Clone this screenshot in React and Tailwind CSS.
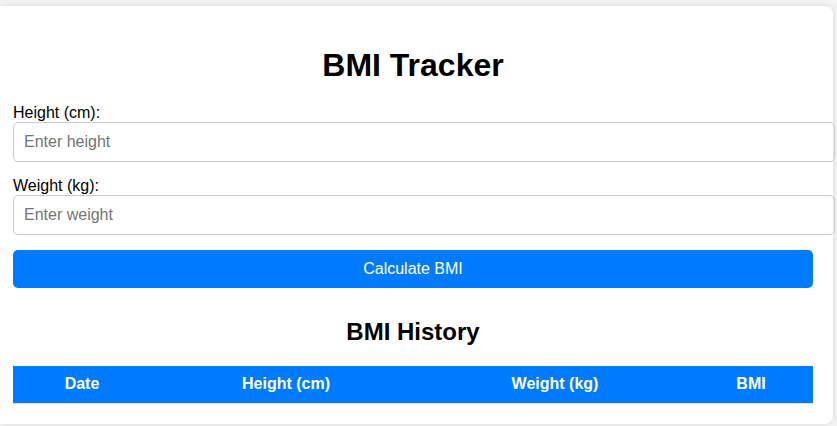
export default function App() {
  const font = { fontFamily: '"Liberation Sans", Arial, sans-serif' };
  return (
    <div className="min-h-screen bg-[#f4f4f4] pt-[6px] overflow-hidden" style={font}>
      <div className="w-[833px] bg-white rounded-r-[8px] shadow-[0_0_6px_rgba(0,0,0,0.12)] pl-[13px] pr-[20px] pt-[20px] pb-[20px] text-black">
        <h1 className="mt-[21px] mb-[20px] text-center text-[32px] leading-[37px] font-bold">BMI Tracker</h1>
        <div className="mb-[15px]">
          <label className="block text-[16px] leading-[18px]">Height (cm):</label>
          <input
            type="number"
            placeholder="Enter height"
            className="block w-[822px] h-[40px] px-[10px] text-[16px] border border-[#ccc] rounded-[5px] placeholder:text-[#757575] outline-none"
          />
        </div>
        <div className="mb-[15px]">
          <label className="block text-[16px] leading-[18px]">Weight (kg):</label>
          <input
            type="number"
            placeholder="Enter weight"
            className="block w-[822px] h-[40px] px-[10px] text-[16px] border border-[#ccc] rounded-[5px] placeholder:text-[#757575] outline-none"
          />
        </div>
        <button className="block w-[800px] h-[38px] bg-[#007bff] text-white text-[16px] rounded-[5px]">
          Calculate BMI
        </button>
        <h2 className="mt-[30px] mb-[20px] text-center text-[24px] leading-[28px] font-bold">BMI History</h2>
        <table className="w-[800px] border-collapse">
          <thead>
            <tr className="bg-[#007bff] text-white border-b border-[#dde3ea]">
              <th className="w-[138px] h-[37px] p-0 text-center font-bold text-[16px]">Date</th>
              <th className="w-[270px] h-[37px] p-0 text-center font-bold text-[16px]">Height (cm)</th>
              <th className="w-[268px] h-[37px] p-0 text-center font-bold text-[16px]">Weight (kg)</th>
              <th className="w-[124px] h-[37px] p-0 text-center font-bold text-[16px]">BMI</th>
            </tr>
          </thead>
          <tbody></tbody>
        </table>
      </div>
    </div>
  );
}
